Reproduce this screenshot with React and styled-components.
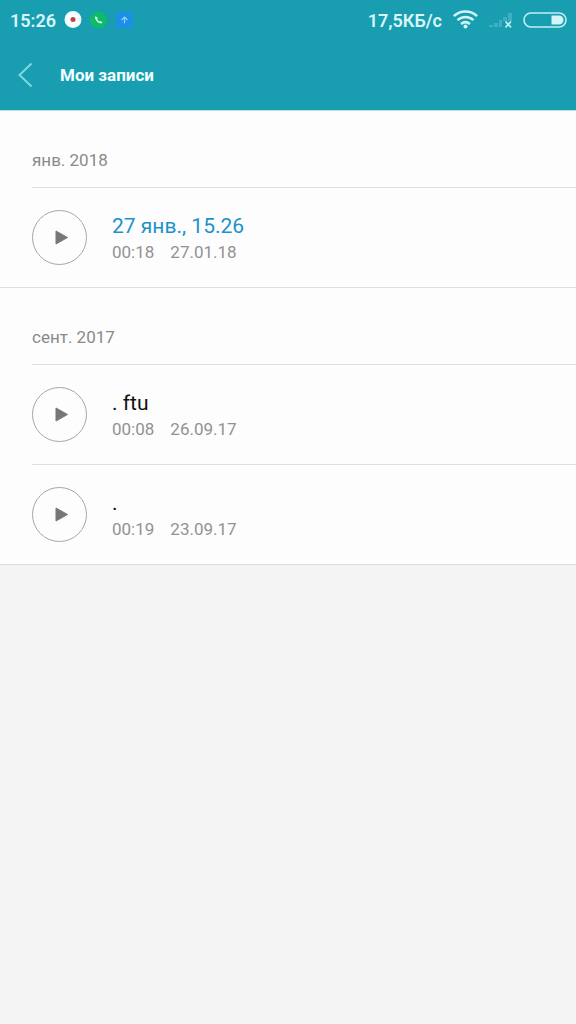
import React from 'react';
import styled, { createGlobalStyle } from 'styled-components';

const GlobalStyle = createGlobalStyle`
  * {
    box-sizing: border-box;
  }
  body {
    margin: 0;
    background: #f4f4f4;
    font-family: Roboto, 'Noto Sans', sans-serif;
  }
`;

const Header = styled.header`
  background: #189eb0;
  border-bottom: 1px solid #b5dfe5;
`;

const StatusBar = styled.div`
  display: flex;
  align-items: center;
  justify-content: space-between;
  height: 40px;
  padding: 0 9px 0 10px;
  color: #d8f6fa;
  font-size: 18px;
  font-weight: 600;
`;

const StatusGroup = styled.div`
  display: flex;
  align-items: center;
  gap: ${({ $gap }) => $gap}px;

  & svg {
    display: block;
  }
`;

const NavBar = styled.div`
  display: flex;
  align-items: center;
  gap: 24px;
  height: 70px;
  padding: 0 16px;
`;

const BackButton = styled.button`
  display: flex;
  padding: 0;
  border: 0;
  background: none;
  cursor: pointer;
`;

const Heading = styled.h1`
  margin: 0;
  color: #f2feff;
  font-size: 17px;
  line-height: 20px;
  font-weight: 700;
`;

const Section = styled.section`
  padding-left: 32px;
  background: #fdfdfd;
  border-bottom: 1px solid #dedede;
`;

const Month = styled.h2`
  margin: 0;
  padding: 38px 0 16px;
  color: #8a8a8a;
  font-size: 17px;
  line-height: 22px;
  font-weight: 400;
`;

const List = styled.ul`
  margin: 0;
  padding: 0;
  list-style: none;
`;

const Row = styled.li`
  display: flex;
  align-items: center;
  gap: 25px;
  height: 100px;
  border-top: 1px solid #dedede;
`;

const PlayButton = styled.button`
  display: flex;
  align-items: center;
  justify-content: center;
  width: 55px;
  height: 55px;
  padding: 0;
  border: 1px solid #a6a6a6;
  border-radius: 50%;
  background: none;
  cursor: pointer;
`;

const Name = styled.div`
  color: ${({ $active }) => ($active ? '#1c92cc' : '#111')};
  font-size: 21px;
  line-height: 28px;
`;

const Meta = styled.div`
  display: flex;
  gap: 16px;
  color: #929292;
  font-size: 17px;
  line-height: 24px;
`;

const sections = [
  {
    month: 'янв. 2018',
    records: [
      { name: '27 янв., 15.26', length: '00:18', date: '27.01.18', active: true },
    ],
  },
  {
    month: 'сент. 2017',
    records: [
      { name: '. ftu', length: '00:08', date: '26.09.17' },
      { name: '.', length: '00:19', date: '23.09.17' },
    ],
  },
];

const RecordIcon = () => (
  <svg width="18" height="18" viewBox="0 0 18 18">
    <circle cx="9" cy="8.5" r="8.5" fill="#f6ffff" />
    <circle cx="9" cy="8.5" r="2.5" fill="#c8403f" />
  </svg>
);

const CallIcon = () => (
  <svg width="18" height="18" viewBox="0 0 18 18">
    <circle cx="8.5" cy="9" r="8.5" fill="#0fba68" />
    <path
      d="M5.7 5.2c-.9.7-.9 1.8-.2 3.1 1 2 2.5 3.4 4.5 4 1.1.3 2 0 2.5-.9l-1.7-1.500-1.3.7c-1-.5-1.8-1.3-2.3-2.4l.6-1.2z"
      fill="#c9ffe4"
    />
  </svg>
);

const UploadIcon = () => (
  <svg width="18" height="18" viewBox="0 0 18 18">
    <rect x="0" y="1" width="17" height="16" rx="1" fill="#1d8fe6" />
    <path
      d="M5.5 9 8.5 6l3 3M8.5 6.300v6"
      fill="none"
      stroke="#8fd3fa"
      strokeWidth="1.2"
    />
  </svg>
);

const WifiIcon = () => (
  <svg width="26" height="20" viewBox="0 0 26 20">
    <g fill="none" stroke="#d0f4f8" strokeWidth="2.5">
      <path d="M1.8 6.2C8.5 0 18.5 0 25.2 6.2" />
      <path d="M5.5 10.2c4.6-4.3 11.4-4.3 16 0" />
      <path d="M9 14c2.7-2.3 6.300-2.3 9 0" />
    </g>
    <circle cx="13.5" cy="16.6" r="2" fill="#d0f4f8" />
  </svg>
);

const SignalIcon = () => (
  <svg width="25" height="18" viewBox="0 0 25 18">
    <g fill="#3fb0bf">
      <rect x="1" y="14" width="4" height="2" />
      <rect x="6" y="12" width="4" height="4" />
      <rect x="11" y="9" width="3" height="7" />
      <rect x="15" y="6" width="4" height="4" />
      <rect x="20" y="2" width="4" height="8" />
    </g>
    <path
      d="m17.5 10.500 5.500 5.800m0-5.800-5.500 5.800"
      stroke="#c5eff4"
      strokeWidth="1.7"
    />
  </svg>
);

const BatteryIcon = () => (
  <svg width="44" height="17" viewBox="0 0 44 17">
    <rect
      x="1"
      y="1"
      width="42"
      height="14"
      rx="7"
      fill="none"
      stroke="#c0eef3"
      strokeWidth="1.6"
    />
    <path d="M28.500 3.500h7.500a4.500 4.500 0 0 1 0 9h-7.500z" fill="#d4f5f8" />
  </svg>
);

const BackIcon = () => (
  <svg width="20" height="26" viewBox="0 0 20 26">
    <path
      d="M15.500 1.500 3.500 13l12 11.500"
      fill="none"
      stroke="#7fd6e2"
      strokeWidth="2"
    />
  </svg>
);

const PlayIcon = () => (
  <svg width="16" height="16" viewBox="0 0 16 16">
    <path
      d="M4 1v13L15.500 7.500z"
      fill="#777"
      stroke="#777"
      strokeLinejoin="round"
    />
  </svg>
);

const Recording = ({ name, length, date, active }) => (
  <Row>
    <PlayButton type="button" aria-label={name}>
      <PlayIcon />
    </PlayButton>
    <div>
      <Name $active={active}>{name}</Name>
      <Meta>
        <span>{length}</span>
        <span>{date}</span>
      </Meta>
    </div>
  </Row>
);

export default function App() {
  return (
    <>
      <GlobalStyle />
      <Header>
        <StatusBar>
          <StatusGroup $gap={8}>
            <span>15:26</span>
            <RecordIcon />
            <CallIcon />
            <UploadIcon />
          </StatusGroup>
          <StatusGroup $gap={10}>
            <span>17,5КБ/с</span>
            <WifiIcon />
            <SignalIcon />
            <BatteryIcon />
          </StatusGroup>
        </StatusBar>
        <NavBar>
          <BackButton type="button" aria-label="Назад">
            <BackIcon />
          </BackButton>
          <Heading>Мои записи</Heading>
        </NavBar>
      </Header>
      <main>
        {sections.map(({ month, records }) => (
          <Section key={month}>
            <Month>{month}</Month>
            <List>
              {records.map((record) => (
                <Recording key={record.date} {...record} />
              ))}
            </List>
          </Section>
        ))}
      </main>
    </>
  );
}
